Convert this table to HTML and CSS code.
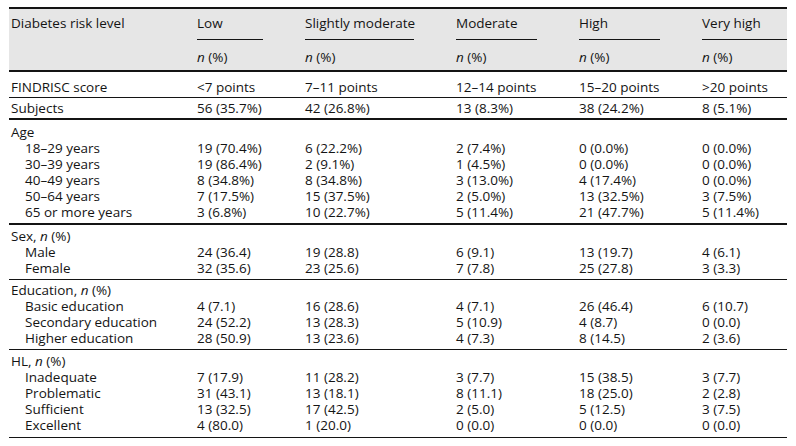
FILE: index.html
```html
<!DOCTYPE html>
<html>
<head>
<meta charset="utf-8">
<link rel="stylesheet" href="styles.css">
</head>
<body>
<table class="t">
  <colgroup>
    <col class="c0"><col class="c1"><col class="c2"><col class="c3"><col class="c4"><col class="c5">
  </colgroup>
  <thead>
    <tr class="h1">
      <th class="lbl">Diabetes risk level</th>
      <th><div class="ul">Low</div></th>
      <th><div class="ul">Slightly moderate</div></th>
      <th><div class="ul">Moderate</div></th>
      <th><div class="ul">High</div></th>
      <th class="last"><div class="ul">Very high</div></th>
    </tr>
    <tr class="h2">
      <th class="lbl"></th>
      <th><i>n</i> (%)</th>
      <th><i>n</i> (%)</th>
      <th><i>n</i> (%)</th>
      <th><i>n</i> (%)</th>
      <th class="last"><i>n</i> (%)</th>
    </tr>
  </thead>
  <tbody>
    <tr class="score"><td class="lbl">FINDRISC score</td><td>&lt;7 points</td><td>7–11 points</td><td>12–14 points</td><td>15–20 points</td><td>&gt;20 points</td></tr>
    <tr class="subj"><td class="lbl">Subjects</td><td>56 (35.7%)</td><td>42 (26.8%)</td><td>13 (8.3%)</td><td>38 (24.2%)</td><td>8 (5.1%)</td></tr>

    <tr class="gh thick age"><td class="lbl">Age</td><td></td><td></td><td></td><td></td><td></td></tr>
    <tr><td class="sub">18–29 years</td><td>19 (70.4%)</td><td>6 (22.2%)</td><td>2 (7.4%)</td><td>0 (0.0%)</td><td>0 (0.0%)</td></tr>
    <tr><td class="sub">30–39 years</td><td>19 (86.4%)</td><td>2 (9.1%)</td><td>1 (4.5%)</td><td>0 (0.0%)</td><td>0 (0.0%)</td></tr>
    <tr><td class="sub">40–49 years</td><td>8 (34.8%)</td><td>8 (34.8%)</td><td>3 (13.0%)</td><td>4 (17.4%)</td><td>0 (0.0%)</td></tr>
    <tr><td class="sub">50–64 years</td><td>7 (17.5%)</td><td>15 (37.5%)</td><td>2 (5.0%)</td><td>13 (32.5%)</td><td>3 (7.5%)</td></tr>
    <tr class="gl"><td class="sub">65 or more years</td><td>3 (6.8%)</td><td>10 (22.7%)</td><td>5 (11.4%)</td><td>21 (47.7%)</td><td>5 (11.4%)</td></tr>

    <tr class="gh thick"><td class="lbl">Sex, <i>n</i> (%)</td><td></td><td></td><td></td><td></td><td></td></tr>
    <tr><td class="sub">Male</td><td>24 (36.4)</td><td>19 (28.8)</td><td>6 (9.1)</td><td>13 (19.7)</td><td>4 (6.1)</td></tr>
    <tr class="gl"><td class="sub">Female</td><td>32 (35.6)</td><td>23 (25.6)</td><td>7 (7.8)</td><td>25 (27.8)</td><td>3 (3.3)</td></tr>

    <tr class="gh thin edu"><td class="lbl">Education, <i>n</i> (%)</td><td></td><td></td><td></td><td></td><td></td></tr>
    <tr><td class="sub">Basic education</td><td>4 (7.1)</td><td>16 (28.6)</td><td>4 (7.1)</td><td>26 (46.4)</td><td>6 (10.7)</td></tr>
    <tr><td class="sub">Secondary education</td><td>24 (52.2)</td><td>13 (28.3)</td><td>5 (10.9)</td><td>4 (8.7)</td><td>0 (0.0)</td></tr>
    <tr class="gl"><td class="sub">Higher education</td><td>28 (50.9)</td><td>13 (23.6)</td><td>4 (7.3)</td><td>8 (14.5)</td><td>2 (3.6)</td></tr>

    <tr class="gh thin"><td class="lbl">HL, <i>n</i> (%)</td><td></td><td></td><td></td><td></td><td></td></tr>
    <tr><td class="sub">Inadequate</td><td>7 (17.9)</td><td>11 (28.2)</td><td>3 (7.7)</td><td>15 (38.5)</td><td>3 (7.7)</td></tr>
    <tr><td class="sub">Problematic</td><td>31 (43.1)</td><td>13 (18.1)</td><td>8 (11.1)</td><td>18 (25.0)</td><td>2 (2.8)</td></tr>
    <tr><td class="sub">Sufficient</td><td>13 (32.5)</td><td>17 (42.5)</td><td>2 (5.0)</td><td>5 (12.5)</td><td>3 (7.5)</td></tr>
    <tr class="gl final"><td class="sub">Excellent</td><td>4 (80.0)</td><td>1 (20.0)</td><td>0 (0.0)</td><td>0 (0.0)</td><td>0 (0.0)</td></tr>
  </tbody>
</table>
</body>
</html>
```

FILE: styles.css
```css
html, body {
  margin: 0;
  padding: 0;
  background: #ffffff;
}
body {
  font-family: "Open Sans", "Noto Sans", sans-serif;
  font-size: 13.5px;
  color: #141414;
}
.t {
  margin: 7px 0 0 9px;
  width: 778px;
  border-collapse: separate;
  border-spacing: 0;
  table-layout: fixed;
}
.c0 { width: 188px; }
.c1 { width: 108px; }
.c2 { width: 151px; }
.c3 { width: 123px; }
.c4 { width: 123px; }
.c5 { width: 85px; }

th, td {
  padding: 0;
  text-align: left;
  font-weight: normal;
  white-space: nowrap;
  vertical-align: top;
  line-height: 16px;
}
th {
  background: #e6e6e6;
}
.lbl {
  padding-left: 2px;
}
.sub {
  padding-left: 16px;
}

/* header row 1 */
.h1 th {
  border-top: 2px solid #141414;
  padding-top: 6px;
  padding-right: 42px;
}
.h1 th.lbl,
.h1 th.last {
  padding-right: 0;
}
.ul {
  border-bottom: 1px solid #141414;
  padding-bottom: 8px;
}
/* header row 2 */
.h2 th {
  padding-top: 9px;
  padding-bottom: 5px;
  border-bottom: 2px solid #141414;
}

.score td {
  padding-top: 7px;
  padding-bottom: 2px;
  border-bottom: 1px solid #141414;
}
.subj td {
  padding-top: 2px;
  padding-bottom: 2px;
}

.gh td {
  padding-top: 3px;
}
.gh.age td {
  padding-top: 4px;
}
.gh.edu td {
  padding-top: 2px;
}
.gh.thick td {
  border-top: 2px solid #141414;
}
.gh.thin td {
  border-top: 1px solid #141414;
}
.gl td {
  padding-bottom: 3px;
}
.gl.final td {
  padding-bottom: 4px;
  border-bottom: 1px solid #141414;
}
```
